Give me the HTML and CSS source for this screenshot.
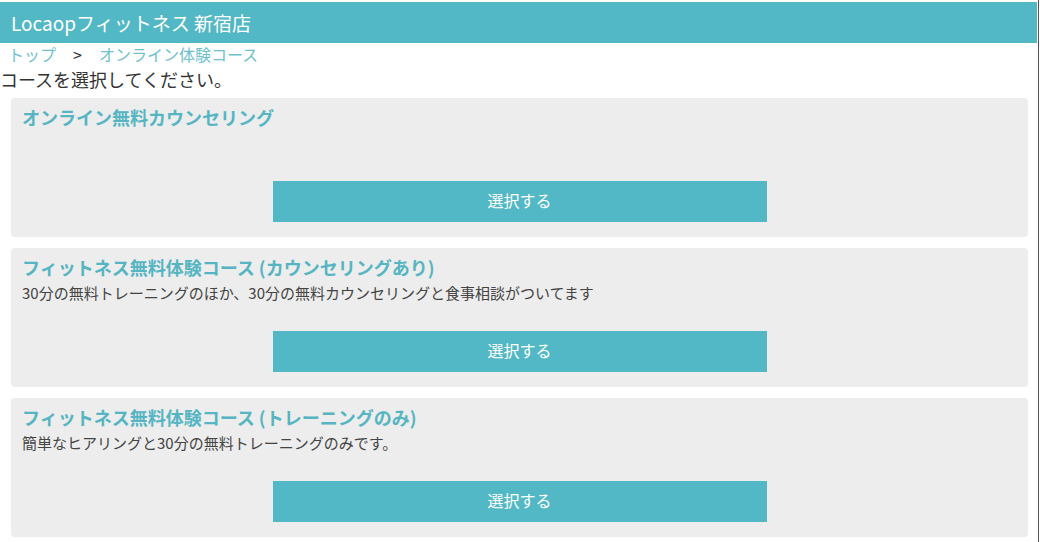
FILE: index.html
```html
<!DOCTYPE html>
<html lang="ja">
<head>
  <meta charset="UTF-8">
  <title>Locaopフィットネス 新宿店</title>
  <link rel="stylesheet" href="styles.css">
</head>
<body>
  <div class="page">
    <h1 class="shop-name">Locaopフィットネス 新宿店</h1>
    <div class="breadcrumb">
      <a href="#">トップ</a><span class="sep">&gt;</span><a href="#">オンライン体験コース</a>
    </div>
    <p class="lead">コースを選択してください。</p>
    <div class="courses">
      <div class="course">
        <div class="course-info">
          <h2>オンライン無料カウンセリング</h2>
          <p></p>
        </div>
        <button class="select">選択する</button>
      </div>
      <div class="course">
        <div class="course-info">
          <h2>フィットネス無料体験コース (カウンセリングあり)</h2>
          <p>30分の無料トレーニングのほか、30分の無料カウンセリングと食事相談がついてます</p>
        </div>
        <button class="select">選択する</button>
      </div>
      <div class="course">
        <div class="course-info">
          <h2>フィットネス無料体験コース (トレーニングのみ)</h2>
          <p>簡単なヒアリングと30分の無料トレーニングのみです。</p>
        </div>
        <button class="select">選択する</button>
      </div>
    </div>
  </div>
</body>
</html>
```

FILE: styles.css
```css
* {font-family: "Noto Sans CJK JP", "Noto Sans", sans-serif;}
html, body {
  margin: 0;
  background: #fff;
}
body {
  width: 1037px;
  padding: 2px 1px 0 0;
  border-right: 1px solid #555;
  min-height: 540px;
}
.shop-name {
  margin: 0;
  height: 41px;
  line-height: 41px;
  padding-left: 11px;
  background: #53b8c5;
  color: #fff;
  font-size: 19px;
  font-weight: normal;
}
.breadcrumb {
  padding-left: 8px;
  font-size: 16px;
  line-height: 23px;
  color: #333;
}
.breadcrumb a {
  color: #6fc2cc;
  text-decoration: none;
}
.breadcrumb .sep {
  padding: 0 17px;
}
.lead {
  margin: 0;
  font-size: 18px;
  line-height: 26px;
  color: #333;
}
.courses {
  margin: 6px 9px 0 11px;
  display: flex;
  flex-direction: column;
  gap: 11px;
}
.course {
  height: 139px;
  box-sizing: border-box;
  padding: 6px 11px 15px;
  background: #ededed;
  border-radius: 4px;
  display: flex;
  flex-direction: column;
}
.course-info {
  height: 52px;
}
.course h2 {
  margin: 0;
  font-size: 18px;
  line-height: 26px;
  color: #55b5c2;
}
.course p {
  margin: 0;
  font-size: 15px;
  line-height: 26px;
  color: #444;
}
.select {
  margin: 25px auto 0;
  width: 494px;
  height: 41px;
  padding: 0 0 4px;
  border: none;
  background: #53b8c5;
  color: #fff;
  font-size: 16px;
  cursor: pointer;
}
```
